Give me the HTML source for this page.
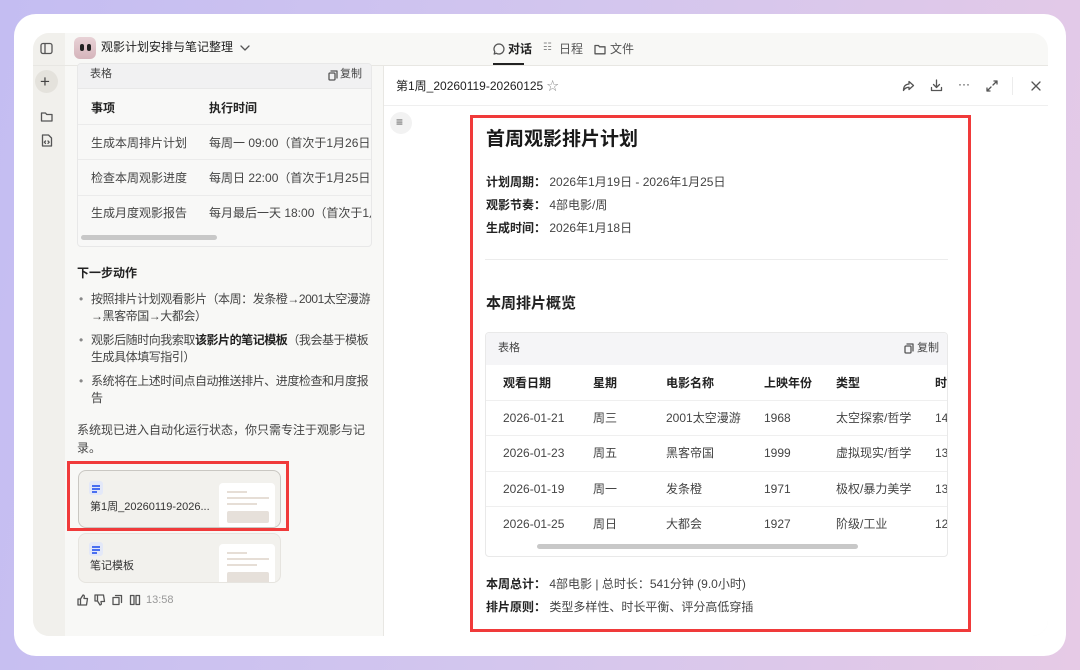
<!DOCTYPE html>
<html><head><meta charset="utf-8"><style>
*{margin:0;padding:0;box-sizing:border-box}
body{width:1080px;height:670px;overflow:hidden;position:relative;font-family:"Liberation Sans","Noto Sans CJK SC",sans-serif;color:#222;background:linear-gradient(100deg,#c4bdf2 0%,#d3c6ee 50%,#e6cae6 100%)}
.a{position:absolute}
.t{position:absolute;white-space:nowrap;line-height:1}
.card{left:14px;top:14px;width:1052px;height:642px;background:#fff;border-radius:22px}
.app{left:33px;top:33px;width:1015px;height:603px;background:#f8f8f6;border-radius:16px;overflow:hidden}
.sb{left:0;top:0;width:32px;height:603px;background:#f1f0ec}
svg{position:absolute;overflow:visible}
.s{fill:none;stroke:#555;stroke-width:1.3;stroke-linecap:round;stroke-linejoin:round}
.f12{font-size:12px}
.b{font-weight:bold}
.g{color:#444}
</style></head><body>
<div class="a card"></div>
<div class="a app">
  <div class="a sb"></div>
  <svg style="left:7px;top:9px" width="14" height="14"><rect x="1" y="1.5" width="11" height="10" rx="2" class="s"/><line x1="5" y1="2" x2="5" y2="11" class="s"/></svg>
  <div class="a" style="left:2px;top:37px;width:23px;height:23px;border-radius:50%;background:#e4e2dc"></div>
  <div class="t" style="left:7px;top:40px;font-size:17px;color:#444">+</div>
  <svg style="left:7px;top:77px" width="14" height="14"><path d="M1.5 3h4l1.2 1.5h5.3v6.5h-10.5z" class="s"/></svg>
  <svg style="left:8px;top:101px" width="14" height="14"><path d="M1.5 1h6l3 3v8h-9z" class="s"/><path d="M4.5 7l-1.2 1.2 1.2 1.2M7 7l1.2 1.2L7 9.4" class="s" stroke-width="1"/></svg>

  <div class="a" style="left:41px;top:4px;width:22px;height:22px;border-radius:6px;background:linear-gradient(#e8d2d6,#d5b4bb)"></div>
  <div class="a" style="left:47px;top:11px;width:4px;height:7px;border-radius:2px;background:#222"></div>
  <div class="a" style="left:54px;top:11px;width:4px;height:7px;border-radius:2px;background:#222"></div>
  <div class="t" style="left:68px;top:8px;font-size:12px;color:#222">观影计划安排与笔记整理</div>
  <svg style="left:207px;top:11px" width="10" height="8"><path d="M1 2l4 4 4-4" class="s"/></svg>
  <div class="a" style="left:0;top:32px;width:1015px;height:1px;background:#e8e7e3"></div>
  <svg style="left:460px;top:10px" width="12" height="12"><path d="M6 1a5 5 0 1 1-2.6 9.3L1.2 11l.6-2.3A5 5 0 0 1 6 1z" class="s" stroke="#222"/></svg>
  <div class="t b" style="left:475px;top:10px;font-size:12px;color:#222">对话</div>
  <div class="a" style="left:460px;top:30px;width:31px;height:2px;background:#222"></div>
  <div class="t" style="left:510px;top:10px;font-size:10px;color:#888">☷</div>
  <div class="t" style="left:526px;top:10px;font-size:12px;color:#555">日程</div>
  <svg style="left:561px;top:11px" width="12" height="11"><path d="M1 1.5h3.5l1 1.3H11v7H1z" class="s" stroke="#666"/></svg>
  <div class="t" style="left:577px;top:10px;font-size:12px;color:#555">文件</div>

  <div class="a" style="left:44px;top:30px;width:295px;height:184px;border:1px solid #e8e8e8;border-radius:4px;background:#f8f8f7;overflow:hidden">
    <div class="a" style="left:0;top:0;width:295px;height:25px;background:#f1f1f2;border-bottom:1px solid #e8e8e8"></div>
    <div class="t" style="left:12px;top:5px;font-size:11px;color:#444">表格</div>
    <svg style="left:250px;top:6px" width="10" height="11"><rect x="1" y="3" width="6" height="7" rx="1" class="s" stroke="#444"/><path d="M3 1h6v7" class="s" stroke="#444"/></svg>
    <div class="t" style="left:262px;top:5px;font-size:11px;color:#444">复制</div>
    <div class="t b" style="left:13px;top:38px;font-size:12px">事项</div>
    <div class="t b" style="left:131px;top:38px;font-size:12px">执行时间</div>
    <div class="a" style="left:0;top:60px;width:295px;height:1px;background:#ebebeb"></div>
    <div class="t g" style="left:13px;top:73px;font-size:12px">生成本周排片计划</div>
    <div class="t g" style="left:131px;top:73px;font-size:12px">每周一 09:00（首次于1月26日）</div>
    <div class="a" style="left:0;top:95px;width:295px;height:1px;background:#ebebeb"></div>
    <div class="t g" style="left:13px;top:108px;font-size:12px">检查本周观影进度</div>
    <div class="t g" style="left:131px;top:108px;font-size:12px">每周日 22:00（首次于1月25日）</div>
    <div class="a" style="left:0;top:131px;width:295px;height:1px;background:#ebebeb"></div>
    <div class="t g" style="left:13px;top:143px;font-size:12px">生成月度观影报告</div>
    <div class="t g" style="left:131px;top:143px;font-size:12px">每月最后一天 18:00（首次于1月</div>
    <div class="a" style="left:3px;top:171px;width:136px;height:5px;border-radius:3px;background:#c8c8c8"></div>
  </div>
  <div class="t b" style="left:44px;top:234px;font-size:12px">下一步动作</div>
  <div class="a f12 g" style="left:44px;top:258px;width:320px;line-height:17px;white-space:nowrap;letter-spacing:-0.45px">
    <div style="position:relative;padding-left:14px;margin-bottom:7px"><span style="position:absolute;left:2px;color:#888">•</span>按照排片计划观看影片（本周：发条橙→2001太空漫游<br>→黑客帝国→大都会）</div>
    <div style="position:relative;padding-left:14px;margin-bottom:7px"><span style="position:absolute;left:2px;color:#888">•</span>观影后随时向我索取<b style="color:#222">该影片的笔记模板</b>（我会基于模板<br>生成具体填写指引）</div>
    <div style="position:relative;padding-left:14px"><span style="position:absolute;left:2px;color:#888">•</span>系统将在上述时间点自动推送排片、进度检查和月度报<br>告</div>
  </div>
  <div class="a f12 g" style="left:44px;top:388px;width:300px;line-height:18px;white-space:nowrap">系统现已进入自动化运行状态，你只需专注于观影与记<br>录。</div>

  <div class="a" style="left:34px;top:428px;width:222px;height:70px;border:3px solid #f03a3a"></div>
  <div class="a" style="left:45px;top:437px;width:203px;height:58px;border:1px solid #c9c7c2;border-radius:8px;background:#f2f1ed;overflow:hidden">
    <div class="a" style="left:140px;top:12px;width:56px;height:46px;background:#fff;border-radius:4px"></div>
    <div class="a" style="left:148px;top:20px;width:20px;height:2px;background:#e6ded6"></div>
    <div class="a" style="left:148px;top:26px;width:42px;height:2px;background:#e6ded6"></div>
    <div class="a" style="left:148px;top:32px;width:30px;height:2px;background:#e6ded6"></div>
    <div class="a" style="left:148px;top:40px;width:42px;height:12px;background:#e6e0da;border-radius:2px"></div>
    <div class="a" style="left:10px;top:10px;width:14px;height:14px;border-radius:3px;background:#e3e8f8"></div>
    <div class="a" style="left:13px;top:14px;width:8px;height:1.5px;background:#4a6ff0"></div>
    <div class="a" style="left:13px;top:17px;width:8px;height:1.5px;background:#4a6ff0"></div>
    <div class="a" style="left:13px;top:20px;width:5px;height:1.5px;background:#4a6ff0"></div>
    <div class="t" style="left:11px;top:31px;font-size:11px;color:#333">第1周_20260119-2026...</div>
  </div>
  <div class="a" style="left:45px;top:500px;width:203px;height:50px;border:1px solid #e6e4df;border-radius:8px;background:#f2f1ed;overflow:hidden">
    <div class="a" style="left:140px;top:10px;width:56px;height:46px;background:#fff;border-radius:4px"></div>
    <div class="a" style="left:148px;top:18px;width:20px;height:2px;background:#e6ded6"></div>
    <div class="a" style="left:148px;top:24px;width:42px;height:2px;background:#e6ded6"></div>
    <div class="a" style="left:148px;top:30px;width:30px;height:2px;background:#e6ded6"></div>
    <div class="a" style="left:148px;top:38px;width:42px;height:12px;background:#e6e0da;border-radius:2px"></div>
    <div class="a" style="left:10px;top:8px;width:14px;height:14px;border-radius:3px;background:#e3e8f8"></div>
    <div class="a" style="left:13px;top:12px;width:8px;height:1.5px;background:#4a6ff0"></div>
    <div class="a" style="left:13px;top:15px;width:8px;height:1.5px;background:#4a6ff0"></div>
    <div class="a" style="left:13px;top:18px;width:5px;height:1.5px;background:#4a6ff0"></div>
    <div class="t" style="left:11px;top:27px;font-size:11px;color:#333">笔记模板</div>
  </div>
  <svg style="left:44px;top:561px" width="12" height="12"><path d="M1 5h2.5v6H1zM3.5 5l2.5-4c1 0 1.5.7 1.3 1.7L7 4.5h3.5l-1 6.5H3.5" class="s" stroke="#999" stroke-width="1"/></svg>
  <svg style="left:61px;top:561px" width="12" height="12"><path d="M1 7h2.5V1H1zM3.5 7L6 11c1 0 1.5-.7 1.3-1.7L7 7.5h3.5L9.5 1H3.5" class="s" stroke="#999" stroke-width="1"/></svg>
  <svg style="left:79px;top:561px" width="12" height="12"><rect x="1" y="3.5" width="6" height="7" class="s" stroke="#999" stroke-width="1"/><path d="M3.5 1.5h6v7" class="s" stroke="#999" stroke-width="1"/></svg>
  <svg style="left:96px;top:561px" width="12" height="12"><path d="M1.5 1.5h3.5v9H1.5zM7 1.5h3.5v9H7z" class="s" stroke="#999" stroke-width="1"/></svg>
  <div class="t" style="left:113px;top:562px;font-size:11px;color:#999">13:58</div>

  <div class="a" style="left:350px;top:33px;width:665px;height:570px;background:#fff;border-left:1px solid #e8e7e3"></div>
  <div class="t" style="left:363px;top:47px;font-size:12px;color:#222">第1周_20260119-20260125 <span style="color:#888">☆</span></div>
  <svg style="left:869px;top:47px" width="13" height="12"><path d="M7 1.5l4.5 4-4.5 4V7.3C4 7.3 2.5 8.5 1.5 10.5c0-4 2-6.2 5.5-6.5z" class="s" stroke="#333" stroke-width="1.1"/></svg>
  <svg style="left:897px;top:46px" width="13" height="13"><path d="M6.5 1v7M3.5 5.5l3 3 3-3M1.5 8.5v3h10v-3" class="s" stroke="#333" stroke-width="1.1"/></svg>
  <div class="t" style="left:925px;top:45px;font-size:12px;color:#333">···</div>
  <svg style="left:953px;top:47px" width="12" height="12"><path d="M7 5l4-4M8 1h3v3M5 7l-4 4M1 8v3h3" class="s" stroke="#333" stroke-width="1.1"/></svg>
  <div class="a" style="left:979px;top:44px;width:1px;height:18px;background:#ececec"></div>
  <svg style="left:998px;top:48px" width="10" height="10"><path d="M1 1l8 8M9 1l-8 8" class="s" stroke="#333" stroke-width="1.2"/></svg>
  <div class="a" style="left:351px;top:72px;width:664px;height:1px;background:#efefef"></div>
  <div class="a" style="left:357px;top:79px;width:22px;height:22px;border-radius:50%;background:#f2f2f2"></div>
  <div class="t" style="left:363px;top:83px;font-size:12px;color:#555">≡</div>

  <div class="a" style="left:437px;top:82px;width:501px;height:517px;border:3px solid #f03a3a"></div>
  <div class="t b" style="left:453px;top:97px;font-size:19px;color:#1a1a1a">首周观影排片计划</div>
  <div class="t f12" style="left:453px;top:143px"><b>计划周期：</b>&nbsp;<span class="g">2026年1月19日 - 2026年1月25日</span></div>
  <div class="t f12" style="left:453px;top:166px"><b>观影节奏：</b>&nbsp;<span class="g">4部电影/周</span></div>
  <div class="t f12" style="left:453px;top:189px"><b>生成时间：</b>&nbsp;<span class="g">2026年1月18日</span></div>
  <div class="a" style="left:452px;top:226px;width:463px;height:1px;background:#ececec"></div>
  <div class="t" style="left:453px;top:263px;font-size:15px;font-weight:bold;color:#222">本周排片概览</div>
  <div class="a" style="left:452px;top:299px;width:463px;height:225px;border:1px solid #e9e9e9;border-radius:4px;overflow:hidden">
    <div class="a" style="left:0;top:0;width:463px;height:32px;background:#f5f5f7"></div>
    <div class="t" style="left:12px;top:10px;font-size:11px;color:#444">表格</div>
    <svg style="left:418px;top:10px" width="10" height="11"><rect x="1" y="3" width="6" height="7" rx="1" class="s" stroke="#444"/><path d="M3 1h6v7" class="s" stroke="#444"/></svg>
    <div class="t" style="left:431px;top:10px;font-size:11px;color:#444">复制</div>
    <div class="t b f12" style="left:17px;top:44px">观看日期</div><div class="t b f12" style="left:107px;top:44px">星期</div><div class="t b f12" style="left:180px;top:44px">电影名称</div><div class="t b f12" style="left:278px;top:44px">上映年份</div><div class="t b f12" style="left:350px;top:44px">类型</div><div class="t b f12" style="left:449px;top:44px">时</div>
    <div class="a" style="left:0;top:67px;width:463px;height:1px;background:#efefef"></div>
    <div class="t g f12" style="left:17px;top:79px">2026-01-21</div><div class="t g f12" style="left:107px;top:79px">周三</div><div class="t g f12" style="left:180px;top:79px">2001太空漫游</div><div class="t g f12" style="left:278px;top:79px">1968</div><div class="t g f12" style="left:350px;top:79px">太空探索/哲学</div><div class="t g f12" style="left:449px;top:79px">14</div>
    <div class="a" style="left:0;top:102px;width:463px;height:1px;background:#efefef"></div>
    <div class="t g f12" style="left:17px;top:114px">2026-01-23</div><div class="t g f12" style="left:107px;top:114px">周五</div><div class="t g f12" style="left:180px;top:114px">黑客帝国</div><div class="t g f12" style="left:278px;top:114px">1999</div><div class="t g f12" style="left:350px;top:114px">虚拟现实/哲学</div><div class="t g f12" style="left:449px;top:114px">13</div>
    <div class="a" style="left:0;top:138px;width:463px;height:1px;background:#efefef"></div>
    <div class="t g f12" style="left:17px;top:150px">2026-01-19</div><div class="t g f12" style="left:107px;top:150px">周一</div><div class="t g f12" style="left:180px;top:150px">发条橙</div><div class="t g f12" style="left:278px;top:150px">1971</div><div class="t g f12" style="left:350px;top:150px">极权/暴力美学</div><div class="t g f12" style="left:449px;top:150px">13</div>
    <div class="a" style="left:0;top:173px;width:463px;height:1px;background:#efefef"></div>
    <div class="t g f12" style="left:17px;top:185px">2026-01-25</div><div class="t g f12" style="left:107px;top:185px">周日</div><div class="t g f12" style="left:180px;top:185px">大都会</div><div class="t g f12" style="left:278px;top:185px">1927</div><div class="t g f12" style="left:350px;top:185px">阶级/工业</div><div class="t g f12" style="left:449px;top:185px">12</div>
    <div class="a" style="left:51px;top:211px;width:321px;height:5px;border-radius:3px;background:#c8c8c8"></div>
  </div>
  <div class="t f12" style="left:453px;top:545px"><b>本周总计：</b>&nbsp;<span class="g">4部电影 | 总时长：541分钟 (9.0小时)</span></div>
  <div class="t f12" style="left:453px;top:568px"><b>排片原则：</b>&nbsp;<span class="g">类型多样性、时长平衡、评分高低穿插</span></div>
</div>
</body></html>
